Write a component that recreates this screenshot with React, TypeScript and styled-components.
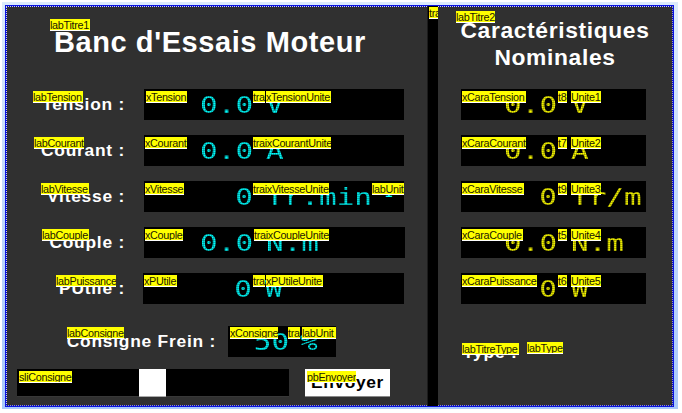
import React from "react";
import styled, { createGlobalStyle } from "styled-components";

const GlobalStyle = createGlobalStyle`
  * { box-sizing: border-box; }
  body { margin: 0; background: #fff; font-family: "Liberation Sans", Arial, sans-serif; }
`;

const Page = styled.div`
  width: 682px;
  height: 413px;
  padding: 2px 4px 4px 2px;
  background: #fff;
  overflow: hidden;
`;

const Frame = styled.div`
  width: 676px;
  height: 407px;
  padding: 3px;
  background: linear-gradient(#dceafb, #a9c8fb);
`;

const Selection = styled.div`
  width: 669px;
  height: 402px;
  border: 1px solid #0a14e0;
  background: #0000c8;
`;

const Screen = styled.div`
  display: grid;
  grid-template-columns: 420px 11px 234px;
  width: 667px;
  height: 400px;
  border: 1px dotted #d8d8d0;
  border-right-color: #a0a098;
  border-bottom-color: #a0a098;
  background: #303030 padding-box;
`;

const Panel = styled.section`
  position: relative;
  display: flex;
  flex-direction: column;
  min-width: 0;
`;

const Divider = styled.div`
  position: relative;
  margin: -1px 0;
  background: #000;
  border-left: 1px solid #1c1c1c;
`;

const Tag = styled.span<{ $x: number; $y: number; $w: number }>`
  position: absolute;
  z-index: 2;
  left: ${(p) => p.$x}px;
  top: ${(p) => p.$y}px;
  width: ${(p) => p.$w}px;
  height: 12px;
  overflow: hidden;
  white-space: nowrap;
  background: #ff0;
  border-bottom: 1px solid #fff;
  color: #1c1800;
  font: 10.8px/12px "Liberation Sans", Arial, sans-serif;
  letter-spacing: -0.3px;
`;

const MainTitle = styled.h1`
  margin: 0;
  height: 82px;
  padding: 18px 0 0 47px;
  color: #fff;
  font-size: 29px;
  line-height: 34px;
  letter-spacing: 0.58px;
  white-space: nowrap;
`;

const SideTitle = styled.h2`
  margin: 0;
  height: 82px;
  padding-top: 10px;
  color: #fff;
  font-size: 22.8px;
  line-height: 27px;
  letter-spacing: 0.65px;
  text-align: center;
`;

const Row = styled.div`
  position: relative;
  display: grid;
  grid-template-columns: 118px 261px;
  column-gap: 19px;
  height: 31px;
  margin-bottom: 15px;
`;

const Label = styled.div`
  color: #fff;
  font-size: 17.4px;
  font-weight: bold;
  line-height: 31px;
  letter-spacing: 0.75px;
  text-align: right;
  white-space: nowrap;
`;

const Display = styled.div<{ $width: number; $value: number; $gap: number; $color: string; $shift?: number }>`
  position: relative;
  display: grid;
  grid-template-columns: ${(p) => p.$value}px 1fr;
  column-gap: ${(p) => p.$gap}px;
  width: ${(p) => p.$width}px;
  height: 31px;
  margin-left: ${(p) => p.$shift ?? 0}px;
  background: #000;
  color: ${(p) => p.$color};
  white-space: pre;
`;

const Segment = styled.span<{ $end?: boolean }>`
  display: block;
  justify-self: ${(p) => (p.$end ? "end" : "start")};
  height: 31px;
  transform: scaleX(1.26);
  transform-origin: ${(p) => (p.$end ? "right" : "left")} center;
  font: 23.3px/31px "DejaVu Sans Mono", monospace;
  mask-image: linear-gradient(#000 50%, rgba(0, 0, 0, 0.78) 50%),
    linear-gradient(90deg, #000 50%, rgba(0, 0, 0, 0.78) 50%);
  mask-size: 1.587px 2px;
  mask-composite: intersect;
`;

const Exponent = styled.span`
  position: absolute;
  left: 240px;
  top: 3px;
  font: 15px/16px "DejaVu Sans Mono", monospace;
`;

const SideRows = styled.div`
  display: flex;
  flex-direction: column;
  gap: 15px;
  padding-left: 23px;
`;

const SetpointRow = styled.div`
  display: grid;
  grid-template-columns: 209px 108px;
  column-gap: 12px;
  margin-top: 7px;
`;

const Controls = styled.div`
  display: flex;
  gap: 16px;
  margin: 12px 0 0 10px;
`;

const Slider = styled.div`
  position: relative;
  display: flex;
  width: 272px;
  height: 28px;
  padding-left: 122px;
  background: #000;
  border-bottom: 1px solid #383838;
`;

const Thumb = styled.div`
  width: 27px;
  height: 28px;
  background: #fff;
  border-bottom: 1px solid #aaa;
`;

const SendButton = styled.button`
  position: relative;
  width: 85px;
  height: 28px;
  padding: 0;
  border: 0;
  border-bottom: 1px solid #888;
  background: #fff;
  color: #000;
  font: bold 17.4px/27px "Liberation Sans", Arial, sans-serif;
  letter-spacing: 0.6px;
`;

const TypeLabel = styled(Label)`
  margin: 33px 0 0 25px;
  text-align: left;
`;

type Tagged = [text: string, x: number, w: number];

const measures: { label: string; value: string; unit: string; shift?: number; width?: number; tags: Tagged[] }[] = [
  { label: "Tension :", value: "0.0", unit: "V", tags: [["labTension", 26, 50], ["xTension", 139, 41], ["tra", 246, 12], ["xTensionUnite", 259, 65]] },
  { label: "Courant :", value: "0.0", unit: "A", tags: [["labCourant", 27, 50], ["xCourant", 138, 42], ["traixCourantUnite", 246, 78]] },
  { label: "Vitesse :", value: "0", unit: "Tr.min", tags: [["labVitesse", 34, 48], ["xVitesse", 138, 39], ["traixVitesseUnite", 246, 76], ["labUnit", 365, 32]] },
  { label: "Couple :", value: "0.0", unit: "N.m", width: 261, tags: [["labCouple", 35, 47], ["xCouple", 138, 38], ["traixCoupleUnite", 247, 75]] },
  { label: "PUtile :", value: "0", unit: "W", shift: -1, width: 261, tags: [["labPuissance", 49, 60], ["xPUtile", 137, 33], ["tra", 246, 12], ["xPUtileUnite", 259, 57]] },
];

const ratings: { value: string; unit: string; tags: Tagged[] }[] = [
  { value: "0.0", unit: "V", tags: [["xCaraTension", 1, 64], ["t8", 97, 9], ["Unite1", 110, 30]] },
  { value: "0.0", unit: "A", tags: [["xCaraCourant", 1, 64], ["t7", 97, 9], ["Unite2", 110, 30]] },
  { value: "0", unit: "Tr/m", tags: [["xCaraVitesse", 1, 62], ["t9", 97, 9], ["Unite3", 110, 30]] },
  { value: "0.0", unit: "N.m", tags: [["xCaraCouple", 1, 61], ["t5", 97, 9], ["Unite4", 110, 30]] },
  { value: "0", unit: "W", tags: [["xCaraPuissance", 1, 75], ["t6", 97, 9], ["Unite5", 110, 30]] },
];

const renderTags = (tags: Tagged[], y: number) =>
  tags.map(([text, x, w]) => (
    <Tag key={text} $x={x} $y={y} $w={w}>{text}</Tag>
  ));

export default function App() {
  return (
    <Page>
      <GlobalStyle />
      <Frame>
        <Selection>
          <Screen>
            <Panel>
              <Tag $x={43} $y={12} $w={40}>labTitre1</Tag>
              <MainTitle>Banc d'Essais Moteur</MainTitle>
              {measures.map((m) => (
                <Row key={m.label}>
                  <Label>{m.label}</Label>
                  <Display $width={m.width ?? 260} $shift={m.shift} $value={109.5} $gap={12.5} $color="#00ffff">
                    <Segment $end>{m.value}</Segment>
                    <Segment>{m.unit}</Segment>
                    {m.label === "Vitesse :" && <Exponent>1</Exponent>}
                  </Display>
                  {renderTags(m.tags, 2)}
                </Row>
              ))}
              <SetpointRow>
                <Label>Consigne Frein :</Label>
                <Display $width={108} $value={61} $gap={11} $color="#00ffff">
                  <Segment $end>50</Segment>
                  <Segment>%</Segment>
                </Display>
              </SetpointRow>
              {renderTags([["labConsigne", 60, 57], ["xConsigne", 223, 48], ["tra", 281, 12], ["labUnit", 295, 34]], 320)}
              <Controls>
                <Slider>
                  <Thumb />
                  <Tag $x={2} $y={2} $w={53}>sliConsigne</Tag>
                </Slider>
                <SendButton>
                  Envoyer
                  <Tag $x={2} $y={2} $w={49}>pbEnvoyer</Tag>
                </SendButton>
              </Controls>
            </Panel>
            <Divider>
              <Tag $x={1} $y={1} $w={9}>tra</Tag>
            </Divider>
            <Panel>
              <Tag $x={18} $y={4} $w={39}>labTitre2</Tag>
              <SideTitle>Caractéristiques<br />Nominales</SideTitle>
              <SideRows>
                {ratings.map((r, i) => (
                  <Display key={i} $width={185} $value={96.5} $gap={13} $color="#ffff00">
                    <Segment $end>{r.value}</Segment>
                    <Segment>{r.unit}</Segment>
                    {renderTags(r.tags, 2)}
                  </Display>
                ))}
              </SideRows>
              <TypeLabel>Type :</TypeLabel>
              <Tag $x={24} $y={336} $w={57}>labTitreType</Tag>
              <Tag $x={89} $y={335} $w={36}>labType</Tag>
            </Panel>
          </Screen>
        </Selection>
      </Frame>
    </Page>
  );
}
